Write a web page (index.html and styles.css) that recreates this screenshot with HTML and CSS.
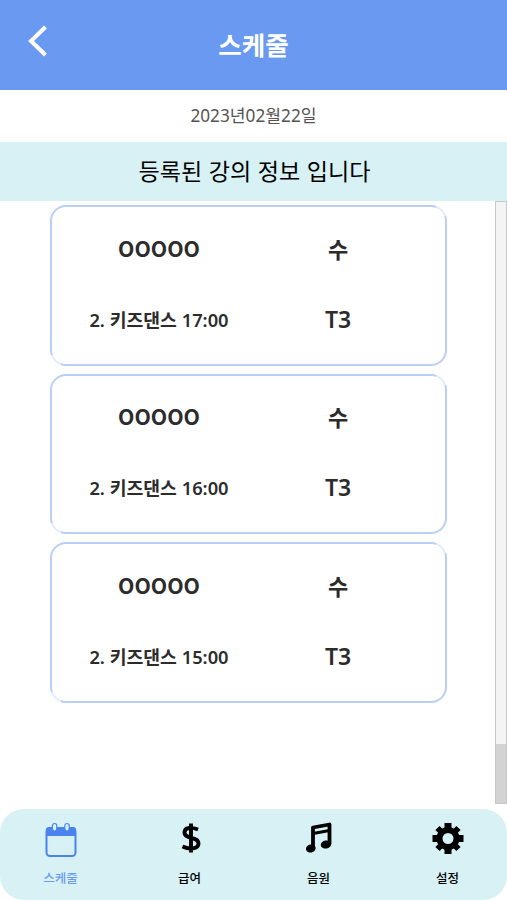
FILE: index.html
```html
<!DOCTYPE html>
<html lang="ko">

<head>
    <meta charset="UTF-8">
    <meta name="viewport" content="width=device-width, initial-scale=1.0">
    <title>스케줄</title>
    <link rel="stylesheet" href="styles.css">
</head>

<body>
    <header>
        <a class="back" href="#" aria-label="뒤로">
            <svg width="20" height="32" viewBox="0 0 20 32">
                <path d="M17.5 2 3 16 17.5 30" fill="none" stroke="#fff" stroke-width="4" />
            </svg>
        </a>
        <h1>스케줄</h1>
    </header>
    <p class="date">2023년02월22일</p>
    <h2>등록된 강의 정보 입니다</h2>

    <main>
        <div class="list">
            <div class="card">
                <span class="name">OOOOO</span>
                <span class="day">수</span>
                <span class="lesson">2. 키즈댄스 17:00</span>
                <span class="room">T3</span>
            </div>
            <div class="card">
                <span class="name">OOOOO</span>
                <span class="day">수</span>
                <span class="lesson">2. 키즈댄스 16:00</span>
                <span class="room">T3</span>
            </div>
            <div class="card">
                <span class="name">OOOOO</span>
                <span class="day">수</span>
                <span class="lesson">2. 키즈댄스 15:00</span>
                <span class="room">T3</span>
            </div>
        </div>
        <div class="scrollbar">
            <div class="thumb"></div>
        </div>
    </main>

    <nav>
        <a class="active" href="#">
            <svg width="34" height="36" viewBox="0 0 34 36">
                <rect x="3.5" y="6" width="29" height="28" rx="3.5" fill="none" stroke="#4a83f0" stroke-width="2" />
                <path d="M3 14V8q0-3 3-3h24q3 0 3 3v6z" fill="#4a83f0" />
                <rect x="9.4" y="1.5" width="4.4" height="7.5" rx="2.2" fill="#d7f1f4" stroke="#4a83f0" stroke-width="1.2" />
                <rect x="21.8" y="1.5" width="4.4" height="7.5" rx="2.2" fill="#d7f1f4" stroke="#4a83f0" stroke-width="1.2" />
            </svg>
            <span>스케줄</span>
        </a>
        <a href="#">
            <svg width="34" height="36" viewBox="0 0 34 36">
                <path d="M26 7.5C20 5 12.5 5 12.5 10.5 12.5 17.5 26.5 14 26.5 21.5 26.5 27.5 17 27.5 10.5 24.5M19 1.5V30.5" fill="none" stroke="#000" stroke-width="3.9" />
            </svg>
            <span>급여</span>
        </a>
        <a href="#">
            <svg width="34" height="36" viewBox="0 0 34 36">
                <path d="M12 27V5.5L28.5 2.5V22" fill="none" stroke="#000" stroke-width="3.8" stroke-linejoin="round" />
                <path d="M12 11.5 28.5 8.5" stroke="#000" stroke-width="2.8" />
                <ellipse cx="9.8" cy="26.5" rx="4.9" ry="4" transform="rotate(-12 9.8 26.5)" />
                <ellipse cx="25" cy="22.5" rx="5.3" ry="4" transform="rotate(-12 25 22.5)" />
            </svg>
            <span>음원</span>
        </a>
        <a href="#">
            <svg width="34" height="36" viewBox="0 0 34 36">
                <circle cx="18" cy="16.5" r="8.5" fill="none" stroke="#000" stroke-width="6" />
                <g stroke="#000" stroke-width="7">
                    <path d="M18 1v6M18 26v6M2.5 16.5h6M27.5 16.5h6" />
                    <path d="M7.5 6l3.5 3.5M25 23.5l3.5 3.5M7.5 27l3.5-3.5M25 9.5l3.5-3.5" stroke-width="6" />
                </g>
            </svg>
            <span>설정</span>
        </a>
    </nav>
</body>

</html>
```
FILE: styles.css
```css
* {
    box-sizing: border-box;
}

body {
    margin: 0;
    height: 900px;
    display: flex;
    flex-direction: column;
    overflow: hidden;
    background: #fff;
    font-family: "Noto Sans CJK KR", sans-serif;
}

header {
    height: 90px;
    display: grid;
    grid-template-columns: 80px 1fr 80px;
    align-items: center;
    background: #6a99f1;
}

.back {
    padding-left: 28px;
    height: 40px;
}

.back svg {
    display: block;
}

h1 {
    margin: 0;
    padding-bottom: 3px;
    text-align: center;
    font-size: 25.5px;
    line-height: 40px;
    color: white;
}

.date {
    margin: 0;
    height: 52px;
    line-height: 51px;
    text-align: center;
    font-family: "Noto Sans", "Noto Sans CJK KR", sans-serif;
    font-size: 17.2px;
    color: #555;
}

h2 {
    margin: 0;
    height: 59px;
    padding-left: 2px;
    line-height: 57px;
    text-align: center;
    font-size: 23.1px;
    font-weight: 400;
    background: #d7f1f4;
}

main {
    height: 603px;
    display: flex;
    justify-content: space-between;
}

.list {
    margin-left: 50px;
    padding-top: 4px;
    width: 397px;
    display: flex;
    flex-direction: column;
    gap: 8px;
}

.card {
    position: relative;
    height: 160.6px;
    padding: 5px 0 8px 19px;
    border: 2px solid #b9cef8;
    border-radius: 16px;
    display: grid;
    grid-template-columns: 176px 182px;
    grid-template-rows: 71px 71px;
    align-items: center;
    text-align: center;
    font-weight: 700;
    font-size: 22px;
    color: #2c2c2c;
}

/* soften the border on two corners */
.card::before,
.card::after {
    content: "";
    position: absolute;
    width: 11px;
    height: 11px;
    background: rgba(255, 255, 255, 0.6);
}

.card::before {
    top: -2px;
    right: -2px;
}

.card::after {
    bottom: -2px;
    left: -2px;
}

.name {
    padding-bottom: 1px;
    font-size: 21.3px;
}

.lesson,
.room {
    font-family: "Noto Sans", "Noto Sans CJK KR", sans-serif;
    font-weight: 600;
}

.lesson {
    font-size: 18.3px;
}

.room {
    font-size: 23px;
}

.scrollbar {
    width: 12px;
    display: flex;
    align-items: flex-end;
    background: #f4f4f4;
    border: 1px solid #c8c8c8;
}

.thumb {
    width: 100%;
    height: 59px;
    background: #d3d3d3;
}

nav {
    margin-top: 5px;
    height: 91px;
    padding-top: 13px;
    display: grid;
    grid-template-columns: repeat(4, 129px);
    justify-content: center;
    border-radius: 24px;
    background: #d7f1f4;
}

nav a {
    display: flex;
    flex-direction: column;
    align-items: center;
    gap: 10px;
    font-size: 12.5px;
    font-weight: 500;
    line-height: 20px;
    color: black;
    text-decoration: none;
}

nav span {
    padding-left: 1px;
}

nav .active {
    color: #6a99f1;
}
```
